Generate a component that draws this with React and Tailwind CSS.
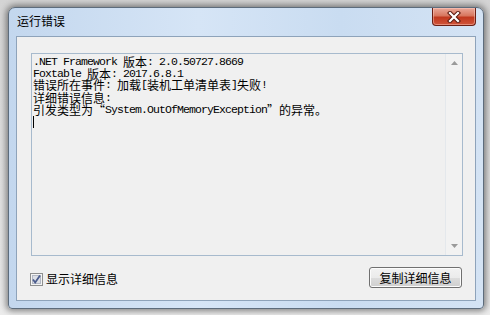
const CJK = /([\u3000-\u303f\u4e00-\u9fff\uff00-\uffef]+|[\u201c\u201d])/;

const lines = [
  { text: ".NET Framework 版本: 2.0.50727.8669", h: "h-[12px]" },
  { text: "Foxtable 版本: 2017.6.8.1", h: "h-[11px]" },
  { text: "错误所在事件: 加载[装机工单清单表]失败!", h: "h-[12px]" },
  { text: "详细错误信息:", h: "h-[13px]" },
  { text: "引发类型为\u201cSystem.OutOfMemoryException\u201d的异常。", h: "h-[12px]" },
];

function Run({ text }) {
  if (text === "\u201c") {
    return <span className="inline-block w-[12px] text-right font-['Noto_Sans_CJK_SC',sans-serif] text-[12px]">{text}</span>;
  }
  if (text === "\u201d") {
    return <span className="inline-block w-[12px] text-left font-['Noto_Sans_CJK_SC',sans-serif] text-[12px]">{text}</span>;
  }
  if (CJK.test(text)) {
    return <span className="font-['Noto_Sans_CJK_SC',sans-serif] text-[12px] tracking-normal">{text}</span>;
  }
  return <span className="font-['Liberation_Mono',monospace] text-[11.5px] tracking-[-0.9px]">{text}</span>;
}

function Line({ text, h }) {
  const parts = text.split(CJK).filter(Boolean);
  return (
    <div className={`${h} leading-[12px] whitespace-pre flex items-center`}>
      {parts.map((p, i) => (
        <Run key={i} text={p} />
      ))}
    </div>
  );
}

function CloseButton() {
  return (
    <div className="w-[44px] h-[18px] rounded-b-[4px] border border-t-0 border-[#6b1f14] bg-[linear-gradient(#eaa99a,#d8775f_45%,#c1391f_55%,#d0553a)] flex items-center justify-center shadow-[inset_0_0_0_1px_rgba(255,210,200,0.45)]">
      <svg width="14" height="12" viewBox="0 0 14 12">
        <path d="M3 2 L11 10 M11 2 L3 10" stroke="#5a1a10" strokeWidth="4.2" strokeLinecap="square" />
        <path d="M3 2 L11 10 M11 2 L3 10" stroke="#ffffff" strokeWidth="2.2" strokeLinecap="square" />
      </svg>
    </div>
  );
}

function Arrow({ down }) {
  return (
    <svg width="7" height="4" viewBox="0 0 7 4">
      <path d={down ? "M0 0 H7 L3.5 4 Z" : "M0 4 H7 L3.5 0 Z"} fill="#9a9a9a" />
    </svg>
  );
}

function CheckBox() {
  return (
    <svg width="13" height="13" viewBox="0 0 13 13">
      <rect x="0.5" y="0.5" width="12" height="12" fill="#f4f4f4" stroke="#8e8f8f" />
      <rect x="2.5" y="2.5" width="8" height="8" fill="#dcdfe6" stroke="#b3b8c4" />
      <path d="M3 6.5 L5.2 9.5 L10 2.5" stroke="#4a5b8c" strokeWidth="1.8" fill="none" />
    </svg>
  );
}

export default function App() {
  return (
    <div className="w-[490px] h-[315px] overflow-hidden bg-[linear-gradient(#d4d4d4,#e6e6e6_90%,#ececec)] pt-[7px] pl-[8px]">
      <div className="w-[476px] h-[302px] rounded-t-[7px] rounded-b-[4px] border border-[#5d6c7c] bg-[linear-gradient(90deg,#c3d7ee,#d6e5f6_40%,#c9dcf1_70%,#d4e3f4)] shadow-[0_0_6px_2px_rgba(0,0,0,0.45)] flex flex-col">
        <div className="h-[28px] flex items-start justify-between pl-[8px] pr-[7px]">
          <span className="mt-[5px] text-[12px] leading-[16px] text-black font-['Noto_Sans_CJK_SC',sans-serif]">
            运行错误
          </span>
          <CloseButton />
        </div>
        <div className="flex-1 mx-[7px] mb-[7px] border border-[#8ea3ba] bg-[#f0f0f0] flex flex-col">
          <div className="mt-[16px] ml-[14px] w-[432px] h-[203px] border border-[#a7bacd] bg-[#f0f0f0] flex">
            <div className="flex-1 pt-[2px] pl-[1px] text-black">
              {lines.map((l, i) => (
                <Line key={i} text={l.text} h={l.h} />
              ))}
              <div className="h-[12px] flex items-center">
                <div className="w-[1px] h-[12px] bg-black" />
              </div>
            </div>
            <div className="w-[17px] border-l border-[#e4e8ec] bg-[#f2f2f2] flex flex-col items-center justify-between py-[7px]">
              <Arrow />
              <Arrow down />
            </div>
          </div>
          <div className="mt-[11px] ml-[13px] mr-[13px] flex items-start justify-between">
            <div className="mt-[5px] flex items-center gap-[3px]">
              <CheckBox />
              <span className="text-[12px] leading-[14px] text-black font-['Noto_Sans_CJK_SC',sans-serif]">
                显示详细信息
              </span>
            </div>
            <div className="w-[93px] h-[21px] rounded-[3px] border border-[#707070] bg-[linear-gradient(#f2f2f2,#ebebeb_50%,#dddddd_50%,#cfcfcf)] shadow-[inset_0_0_0_1px_#fcfcfc] flex items-center justify-center text-[12px] leading-[14px] text-black font-['Noto_Sans_CJK_SC',sans-serif]">
              复制详细信息
            </div>
          </div>
        </div>
      </div>
    </div>
  );
}
